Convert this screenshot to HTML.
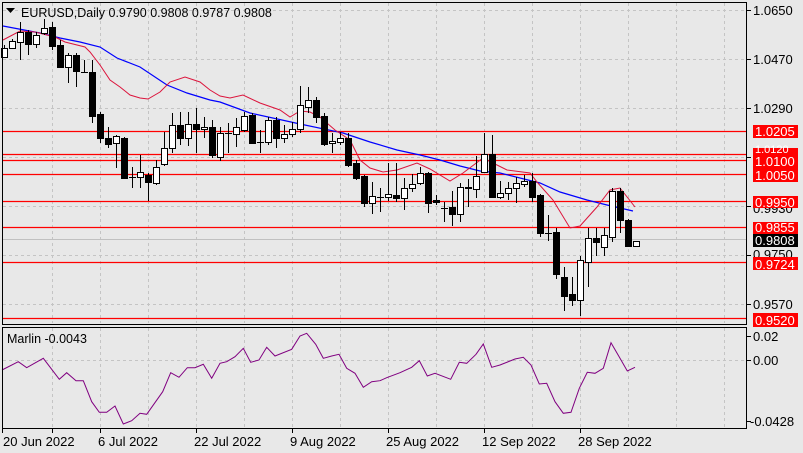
<!DOCTYPE html>
<html><head><meta charset="utf-8"><style>
html,body{margin:0;padding:0;background:#e8e8e8;width:803px;height:453px;overflow:hidden}
svg{display:block;font-family:"Liberation Sans",sans-serif}
.w{fill:#fff;stroke:#000;stroke-width:1}
.b{fill:#000;stroke:#000;stroke-width:1}
.ax{font-size:13px;fill:#000}
.lb{font-size:13px;fill:#fff}
</style></head><body>
<svg width="803" height="453" viewBox="0 0 803 453" xmlns="http://www.w3.org/2000/svg">
<rect width="803" height="453" fill="#e8e8e8"/>
<!-- grid main -->
<g stroke="#c4c4c4" stroke-dasharray="3,3" stroke-width="1">
<path d="M3 10.5H746M3 59.5H746M3 108.5H746M3 157.5H746M3 206.5H746M3 255.5H746M3 304.5H746"/>
<path d="M52.5 3V323M100.5 3V323M148.5 3V323M196.5 3V323M244.5 3V323M292.5 3V323M340.5 3V323M388.5 3V323M436.5 3V323M484.5 3V323M532.5 3V323M580.5 3V323M628.5 3V323M676.5 3V323M724.5 3V323"/>
<path d="M3 360.5H746"/>
<path d="M52.5 328V428M100.5 328V428M148.5 328V428M196.5 328V428M244.5 328V428M292.5 328V428M340.5 328V428M388.5 328V428M436.5 328V428M484.5 328V428M532.5 328V428M580.5 328V428M628.5 328V428M676.5 328V428M724.5 328V428"/>
</g>
<!-- current price line -->
<path d="M3 239.5H746" stroke="#c0c0c0"/>
<!-- red levels -->
<g stroke="#ff0000" stroke-width="1.3">
<path d="M3 131.5H746M3 154.5H746M3 160.5H746M3 174.5H746M3 201.5H746M3 227.5H746M3 262.5H746M3 318.5H746"/>
</g>
<!-- MAs -->
<polyline fill="none" stroke="#0000ff" stroke-width="1.2" points="3,26 40,33 60,38 80,42 100,47 117,58 140,67 167,85 187,93 210,100 220,102 250,113 291,122 300,124 343,133 370,142 397,150 420,155 440,160 460,166 480,171 500,173 540,183 560,192 587,200 607,205 633,211"/>
<polyline fill="none" stroke="#dc143c" stroke-width="1" points="3,40 20,31 35,32 55,37 65,42 85,47 90,52 100,65 110,80 120,87 130,95 140,98 148,99 160,92 170,82 185,77 200,82 210,90 220,96 230,98 243,95 260,103 280,110 290,117 300,111 310,112 320,117 335,130 350,140 360,160 370,168 383,172 397,170 417,163 430,169 450,181 463,173 483,158 493,163 507,170 530,173 537,182 553,200 570,228 580,226 597,207 610,190 620,188 635,207"/>
<!-- wicks -->
<path stroke="#000" stroke-width="1" d="M4.5 45V57M12.5 39V48M20.5 22V60M28.5 30V55M36.5 32V48M44.5 19V35M52.5 22V50M60.5 40V68M68.5 53V83M76.5 53V87M84.5 60V73M92.5 60V123M100.5 112V143M108.5 127V148M116.5 135V168M124.5 137V178M132.5 167V188M140.5 155V188M148.5 173V201M156.5 160V185M164.5 132V166M172.5 113V153M180.5 112V145M188.5 112V146M196.5 108V153M204.5 117V138M212.5 120V158M220.5 127V161M228.5 123V153M236.5 118V147M244.5 112V132M252.5 113V143M260.5 130V153M268.5 117V145M276.5 117V148M284.5 125V143M292.5 122V137M300.5 86V133M308.5 87V113M316.5 97V123M324.5 113V146M332.5 133V153M340.5 132V145M348.5 133V167M356.5 160V180M364.5 175V207M372.5 182V214M380.5 188V212M388.5 163V201M396.5 163V202M404.5 178V210M412.5 174V192M420.5 167V185M428.5 172V213M436.5 195V205M444.5 202V222M452.5 191V226M460.5 183V222M468.5 179V207M476.5 156V198M484.5 133V173M492.5 135V197M500.5 181V199M508.5 182V200M516.5 177V203M524.5 175V187M532.5 173V202M540.5 194V237M548.5 215V241M556.5 228V279M564.5 267V311M572.5 277V306M580.5 256V316M588.5 228V287M596.5 228V256M604.5 228V256M612.5 188V242M620.5 188V233M628.5 219V246M636.5 241V247"/>
<!-- doji bars -->
<path stroke="#000" stroke-width="1" d="M81 72.5h7M129 177.5h7M225 133.5h7M257 142.5h7M377 197.5h7M441 208.5h7M545 233.5h7"/>
<!-- bodies -->
<g>
<rect class="w" x="1.5" y="48.5" width="6" height="9"/>
<rect class="w" x="9.5" y="41.5" width="6" height="7"/>
<rect class="w" x="17.5" y="32.5" width="6" height="10"/>
<rect class="b" x="25.5" y="32.5" width="6" height="12"/>
<rect class="w" x="33.5" y="35.5" width="6" height="9"/>
<rect class="w" x="41.5" y="28.5" width="6" height="5"/>
<rect class="b" x="49.5" y="27.5" width="6" height="19"/>
<rect class="b" x="57.5" y="45.5" width="6" height="22"/>
<rect class="w" x="65.5" y="55.5" width="6" height="12"/>
<rect class="b" x="73.5" y="55.5" width="6" height="16"/>
<rect class="b" x="89.5" y="72.5" width="6" height="44"/>
<rect class="b" x="97.5" y="114.5" width="6" height="24"/>
<rect class="b" x="105.5" y="138.5" width="6" height="6"/>
<rect class="w" x="113.5" y="136.5" width="6" height="7"/>
<rect class="b" x="121.5" y="138.5" width="6" height="40"/>
<rect class="w" x="137.5" y="172.5" width="6" height="5"/>
<rect class="b" x="145.5" y="175.5" width="6" height="7"/>
<rect class="w" x="153.5" y="167.5" width="6" height="16"/>
<rect class="w" x="161.5" y="148.5" width="6" height="16"/>
<rect class="w" x="169.5" y="125.5" width="6" height="23"/>
<rect class="b" x="177.5" y="125.5" width="6" height="13"/>
<rect class="w" x="185.5" y="124.5" width="6" height="14"/>
<rect class="b" x="193.5" y="124.5" width="6" height="5"/>
<rect class="w" x="201.5" y="127.5" width="6" height="2"/>
<rect class="b" x="209.5" y="127.5" width="6" height="28"/>
<rect class="w" x="217.5" y="133.5" width="6" height="24"/>
<rect class="w" x="233.5" y="127.5" width="6" height="7"/>
<rect class="w" x="241.5" y="116.5" width="6" height="14"/>
<rect class="b" x="249.5" y="115.5" width="6" height="28"/>
<rect class="w" x="265.5" y="120.5" width="6" height="22"/>
<rect class="b" x="273.5" y="120.5" width="6" height="18"/>
<rect class="w" x="281.5" y="134.5" width="6" height="4"/>
<rect class="w" x="289.5" y="129.5" width="6" height="5"/>
<rect class="w" x="297.5" y="105.5" width="6" height="24"/>
<rect class="w" x="305.5" y="100.5" width="6" height="7"/>
<rect class="b" x="313.5" y="100.5" width="6" height="17"/>
<rect class="b" x="321.5" y="116.5" width="6" height="28"/>
<rect class="w" x="329.5" y="141.5" width="6" height="2"/>
<rect class="w" x="337.5" y="138.5" width="6" height="4"/>
<rect class="b" x="345.5" y="138.5" width="6" height="27"/>
<rect class="b" x="353.5" y="163.5" width="6" height="15"/>
<rect class="b" x="361.5" y="176.5" width="6" height="27"/>
<rect class="w" x="369.5" y="196.5" width="6" height="7"/>
<rect class="w" x="385.5" y="194.5" width="6" height="3"/>
<rect class="b" x="393.5" y="195.5" width="6" height="3"/>
<rect class="w" x="401.5" y="188.5" width="6" height="10"/>
<rect class="w" x="409.5" y="184.5" width="6" height="4"/>
<rect class="w" x="417.5" y="173.5" width="6" height="10"/>
<rect class="b" x="425.5" y="173.5" width="6" height="30"/>
<rect class="b" x="433.5" y="200.5" width="6" height="2"/>
<rect class="b" x="449.5" y="207.5" width="6" height="7"/>
<rect class="w" x="457.5" y="187.5" width="6" height="27"/>
<rect class="b" x="465.5" y="187.5" width="6" height="1"/>
<rect class="w" x="473.5" y="176.5" width="6" height="13"/>
<rect class="w" x="481.5" y="154.5" width="6" height="18"/>
<rect class="b" x="489.5" y="154.5" width="6" height="43"/>
<rect class="w" x="497.5" y="193.5" width="6" height="4"/>
<rect class="w" x="505.5" y="188.5" width="6" height="5"/>
<rect class="w" x="513.5" y="183.5" width="6" height="5"/>
<rect class="w" x="521.5" y="181.5" width="6" height="3"/>
<rect class="b" x="529.5" y="181.5" width="6" height="16"/>
<rect class="b" x="537.5" y="195.5" width="6" height="38"/>
<rect class="b" x="553.5" y="232.5" width="6" height="42"/>
<rect class="b" x="561.5" y="277.5" width="6" height="19"/>
<rect class="b" x="569.5" y="294.5" width="6" height="6"/>
<rect class="w" x="577.5" y="260.5" width="6" height="40"/>
<rect class="w" x="585.5" y="238.5" width="6" height="24"/>
<rect class="b" x="593.5" y="238.5" width="6" height="4"/>
<rect class="w" x="601.5" y="235.5" width="6" height="12"/>
<rect class="w" x="609.5" y="191.5" width="6" height="46"/>
<rect class="b" x="617.5" y="191.5" width="6" height="29"/>
<rect class="b" x="625.5" y="220.5" width="6" height="26"/>
<rect class="w" x="633.5" y="241.5" width="6" height="5"/>
</g>
<!-- marlin -->
<polyline fill="none" stroke="#800080" stroke-width="1" points="2,370 18.3,361.7 26.7,367.7 43.3,358.3 59.3,379.3 66.7,372.7 76,380.7 83.3,380.7 91.7,401.7 99.3,412.3 106.7,412.3 115,406 123.3,424 131.7,420.7 140,413.3 146.7,414.3 162.7,391.7 170.7,372.7 179,377.3 187.3,367.7 195,367.7 203.3,364.3 211.7,378.3 220,363.3 226.7,361.7 235,356.7 243.3,348.3 250.7,362.3 259,360 266.7,347.3 275,356 291.7,349.3 300,336 306.7,333.3 315.7,344.3 323.3,358.3 331.7,356 339,354.3 346.7,368.3 355,373.3 363.3,387.3 371.7,381.7 380,380.7 386.7,377.7 400,372.7 411.7,367.3 419.3,360.7 427.3,376 435,373.3 450.7,379.3 459.3,362.3 466.7,363.3 476,354.3 483.3,344 491.7,367.3 500,365 515,359 523.3,357.3 531,365 539.3,384 546.7,383.3 555,401.7 563.3,413.3 571,412.3 579.3,388.3 587.3,372.3 595,373.3 603.3,368.3 611,342.7 620,358.3 627.3,371 635,367.3"/>
<!-- frames -->
<rect x="2.5" y="2.5" width="744" height="322" fill="none" stroke="#000"/>
<rect x="2.5" y="327.5" width="744" height="101" fill="none" stroke="#000"/>
<!-- axis ticks -->
<path stroke="#000" d="M747 10.5h4M747 59.5h4M747 108.5h4M747 157.5h4M747 206.5h4M747 255.5h4M747 304.5h4M747 336.5h4M747 360.5h4M747 421.5h4M52.5 429v4M100.5 429v4M196.5 429v4M292.5 429v4M388.5 429v4M484.5 429v4M580.5 429v4M2.5 429v4"/>
<!-- title -->
<path d="M6 8h9l-4.5 5z" fill="#000"/>
<text x="21" y="17" font-size="12.5" fill="#000">EURUSD,Daily  0.9790 0.9808 0.9787 0.9808</text>
<text x="7" y="343" font-size="12.5" fill="#000">Marlin -0.0043</text>
<!-- right axis labels -->
<g class="ax">
<text x="753" y="15">1.0650</text>
<text x="753" y="64">1.0470</text>
<text x="753" y="113">1.0290</text>
<text x="753" y="309">0.9570</text>
<text x="753" y="341">0.02</text>
<text x="753" y="365">0.00</text>
<text x="750" y="426">-0.0428</text>
</g>
<g>
<rect x="753" y="125" width="45" height="13" fill="#ff0000"/>
<rect x="753" y="148" width="45" height="34" fill="#ff0000"/>
<rect x="753" y="196" width="45" height="12" fill="#ff0000"/>
<rect x="753" y="222" width="45" height="12" fill="#ff0000"/>
<rect x="753" y="234" width="45" height="13" fill="#000"/>
<rect x="753" y="257" width="45" height="13" fill="#ff0000"/>
<rect x="753" y="313" width="45" height="14" fill="#ff0000"/>
</g>
<text class="ax" x="753" y="213" fill="#000">0.9930</text>
<rect x="753" y="196" width="45" height="12" fill="#ff0000"/>
<text class="ax" x="753" y="259">0.9750</text>
<rect x="753" y="257" width="45" height="13" fill="#ff0000"/>
<g class="lb">
<text x="755" y="136">1.0205</text>
<text x="755" y="153" font-size="11">1.0120</text>
<rect x="753" y="154" width="45" height="28" fill="#ff0000"/>
<text x="755" y="166">1.0100</text>
<text x="755" y="180">1.0050</text>
<text x="755" y="207">0.9950</text>
<text x="755" y="232">0.9855</text>
<text x="755" y="245">0.9808</text>
<text x="755" y="269">0.9724</text>
<text x="755" y="325">0.9520</text>
</g>
<!-- date labels -->
<g font-size="13" fill="#000">
<text x="3" y="446">20 Jun 2022</text>
<text x="98" y="446">6 Jul 2022</text>
<text x="194" y="446">22 Jul 2022</text>
<text x="290" y="446">9 Aug 2022</text>
<text x="386" y="446">25 Aug 2022</text>
<text x="482" y="446">12 Sep 2022</text>
<text x="578" y="446">28 Sep 2022</text>
</g>
</svg>
</body></html>
